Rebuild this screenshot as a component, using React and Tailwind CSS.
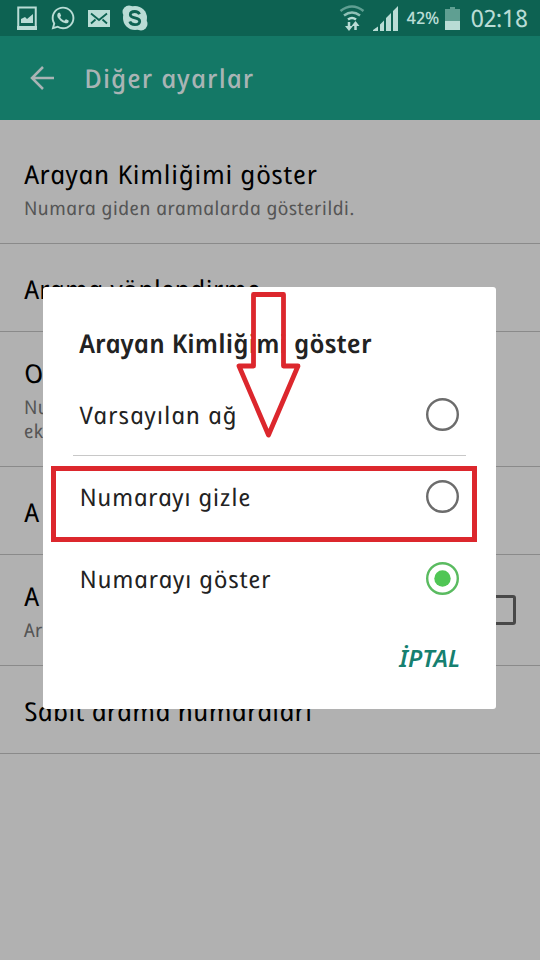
import React from 'react';
import { FaWhatsapp } from 'react-icons/fa';

const rows = [
  {
    title: 'Arayan Kimliğimi göster',
    spacing: 'tracking-[0.75px]',
    lines: ['Numara giden aramalarda gösterildi.'],
  },
  { title: 'Arama yönlendirme', spacing: 'tracking-[0.5px]' },
  { title: 'Otomatik', spacing: 'tracking-[0.6px]', lines: ['Numarayı', 'ekle'] },
  { title: 'Arama', spacing: 'tracking-[3px]' },
  { title: 'Arama', spacing: 'tracking-[3px]', lines: ['Arama'], checkbox: true },
  { title: 'Sabit arama numaraları', spacing: 'tracking-[0.4px]' },
];

const options = [
  { label: 'Varsayılan ağ', spacing: 'tracking-[1px]' },
  { label: 'Numarayı gizle', spacing: 'tracking-[0.75px]' },
  { label: 'Numarayı göster', spacing: 'tracking-[0.85px]', selected: true },
];

// Upright text with the single-storey letters of the italic
const Hand = ({ children, className = '' }) => (
  <span className={`inline-block origin-bottom-left italic skew-x-12 whitespace-nowrap ${className}`}>
    {children}
  </span>
);

const StatusBar = () => (
  <div className="flex h-9 items-center bg-[#0d6252] text-[#b9dcd5]">
    <svg className="ml-[17px] h-[24px] w-[20px]" viewBox="0 0 20 24" fill="none">
      <path d="M1.250 23V1.500h17.500V23" stroke="currentColor" strokeWidth="2" />
      <path d="M0 20h20v4H0z" fill="currentColor" />
      <path d="M4 17v-4l4-2 2 2 6-5v9z" fill="currentColor" />
    </svg>
    <FaWhatsapp className="ml-[13px] h-[26px] w-[26px]" />
    <svg className="ml-[12px] h-[17px] w-[22px]" viewBox="0 0 22 17">
      <rect width="22" height="17" fill="currentColor" />
      <path d="M3 3.500l8 6.500 8-6.500M3 13.500l4.500-4M19 13.500l-4.500-4" fill="none" stroke="#0d6252" strokeWidth="1.800" />
    </svg>
    <svg className="ml-[12px] h-[26px] w-[26px]" viewBox="0 0 26 26" fill="currentColor">
      <circle cx="13" cy="13" r="12" />
      <circle cx="7" cy="7" r="6.500" />
      <circle cx="19" cy="19" r="6.500" />
      <path
        d="M17.500 9.200c-.8-1.900-2.600-2.700-4.700-2.700-2.600 0-4.500 1.200-4.500 3.200 0 4.300 9.400 2.100 9.400 6.500 0 2.200-2.200 3.400-4.800 3.400-2.300 0-4.500-1-5.100-3.100"
        fill="none"
        stroke="#0d6252"
        strokeWidth="2.800"
      />
    </svg>
    <div className="flex-1" />
    <svg className="h-[28px] w-[26px]" viewBox="0 0 26 28" fill="none" stroke="currentColor">
      <path d="M1.500 7q11.500-9 23 0" stroke="#5f9f92" strokeWidth="2.500" />
      <path d="M5 11.500q8-6 16 0" stroke="#8fc0b6" strokeWidth="2.500" />
      <path d="M9 15.500q4-3 8 0" strokeWidth="2.500" />
      <path d="M10 18v6M16.500 26v-6" strokeWidth="2.500" />
      <path d="M6 22h8l-4 5zM12.500 22h8l-4-5z" fill="currentColor" stroke="none" />
    </svg>
    <svg className="ml-[8px] h-[25px] w-[25px]" viewBox="0 0 25 25" fill="currentColor">
      <path d="M0 25v-1l5-3.500V25zM7 25v-6.500l4-4V25zM13 25V12l5-5v18zM20 25V5l5-5v25z" />
    </svg>
    <Hand className="ml-[11px] text-[17px] font-medium">42%</Hand>
    <svg className="ml-[4px] h-[23px] w-[15px]" viewBox="0 0 15 23">
      <path d="M0 2h5V0h5v2h5v12H0z" fill="#5f9f92" />
      <path d="M0 14h15v9H0z" fill="currentColor" />
    </svg>
    <Hand className="ml-[14px] mr-[9px] text-[24px] tracking-[-0.5px]">02:18</Hand>
  </div>
);

const Radio = ({ selected }) => (
  <svg className={`h-[33px] w-[33px] ${selected ? 'text-[#5abb60]' : 'text-[#6c6c6c]'}`} viewBox="0 0 33 33">
    <circle cx="16.500" cy="16.500" r="15.300" fill="none" stroke="currentColor" strokeWidth="2.400" />
    {selected && <circle cx="16.500" cy="16.500" r="8.200" fill="#50c655" />}
  </svg>
);

const Row = ({ title, spacing, lines, checkbox }) => (
  <div
    className={`flex items-start justify-between border-b border-[#8a8a8a] pl-[27px] pr-6 ${
      lines ? 'pt-[25px] pb-[23px]' : 'pt-[29px] pb-[26px]'
    }`}
  >
    <div>
      <div className="h-8 text-[26px] leading-8 text-black">
        <Hand className={spacing}>{title}</Hand>
      </div>
      {lines && (
        <div className="-ml-px mt-[6px] text-[19px] leading-6 tracking-[0.4px] text-[#555]">
          {lines.map((line) => (
            <div key={line} className="h-6">
              <Hand>{line}</Hand>
            </div>
          ))}
        </div>
      )}
    </div>
    {checkbox && <span className="mt-[15px] h-[30px] w-[30px] rounded-[3px] border-[3px] border-[#484848]" />}
  </div>
);

const Dialog = () => (
  <div className="absolute left-[43px] top-[287px] h-[422px] w-[453px] rounded-[3px] bg-white text-[#222]">
    <div className="h-[87px] pl-[39px] pt-[40px] text-[26px] font-semibold leading-8 tracking-[0.15px]">
      <Hand>Arayan Kimliğimi göster</Hand>
    </div>
    <div className="mx-[30px]">
      {options.map(({ label, spacing, selected }) => (
        <div
          key={label}
          className={`flex h-[82px] items-center justify-between border-b pl-[10px] pr-[7px] ${
            selected ? 'border-transparent' : 'border-[#c8c8c8]'
          }`}
        >
          <Hand className={`text-[24px] ${spacing}`}>{label}</Hand>
          <Radio selected={selected} />
        </div>
      ))}
    </div>
    <div className="flex justify-end pr-[36px] pt-[22px] text-[24px] font-semibold leading-8 text-[#168070]">
      <button type="button" className="italic">
        İPTAL
      </button>
    </div>
  </div>
);

const App = () => {
  return (
    <div className="relative h-[960px] w-[540px] overflow-hidden bg-[#b1b1b1] font-['Noto_Sans',sans-serif]">
      <StatusBar />
      <div className="flex h-[84px] items-center bg-[#147866] text-[#a9b4b5]">
        <svg className="ml-[30px] h-[24px] w-[24px]" viewBox="0 0 24 24" fill="none" stroke="currentColor" strokeWidth="2.500">
          <path d="M24 12H2M13 1L2 12l11 11" />
        </svg>
        <Hand className="ml-[34px] text-[26px] font-medium tracking-[1.1px]">Diğer ayarlar</Hand>
      </div>
      <div className="pt-[13px]">
        {rows.map((row, i) => (
          <Row key={i} {...row} />
        ))}
      </div>
      <Dialog />

      {/* Red markings over the dialog */}
      <div className="absolute left-[51px] top-[466px] h-[76px] w-[426px] border-[5px] border-[#dc272d]" />
      <svg className="absolute left-[232px] top-[288px] h-[152px] w-[72px]" viewBox="232 288 72 152" fill="none">
        <path
          d="M253.500 294.500h30V366h14.500L268.500 435L239 366h14.500z"
          stroke="#dc272d"
          strokeWidth="4.800"
          strokeLinejoin="round"
        />
      </svg>
    </div>
  );
};

export default App;
